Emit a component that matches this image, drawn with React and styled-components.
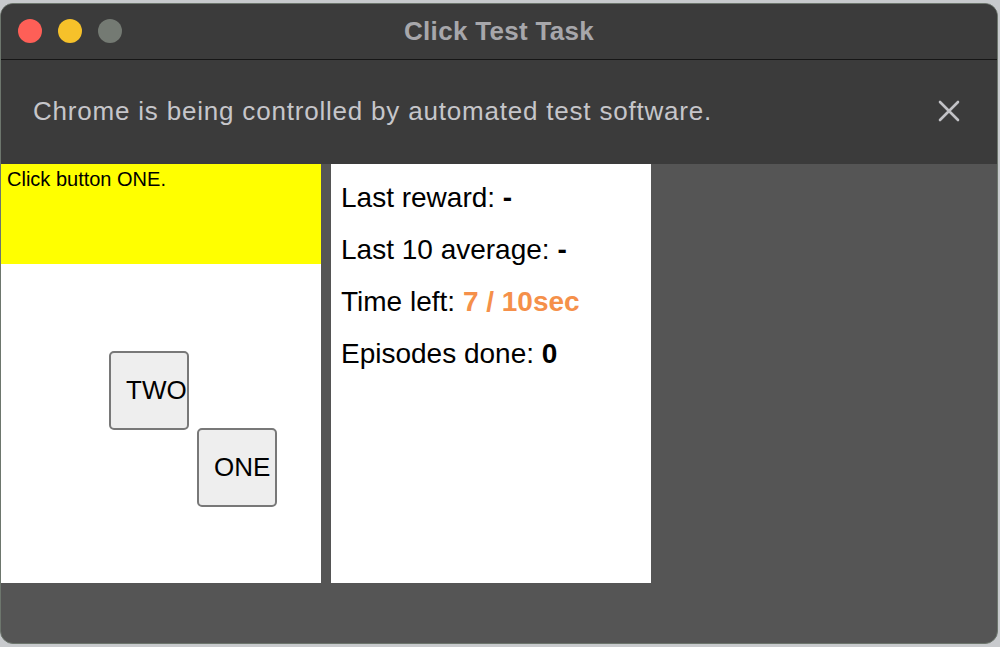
import React from "react";
import styled, { createGlobalStyle } from "styled-components";

const GlobalStyle = createGlobalStyle`
  html, body {
    margin: 0;
    padding: 0;
    background: #c8cacd;
    height: 647px;
    overflow: hidden;
  }
  #root {
    height: 647px;
  }
`;

const Window = styled.div`
  box-sizing: border-box;
  margin: 3px 2px 0 0;
  height: 641px;
  border: 1px solid #6d766d;
  border-radius: 13px;
  overflow: hidden;
  display: flex;
  flex-direction: column;
  background: #555555;
  font-family: "Liberation Sans", Arial, sans-serif;
`;

const TitleBar = styled.div`
  position: relative;
  height: 55px;
  flex: none;
  background: #3b3b3b;
  border-bottom: 1px solid #161616;
  display: flex;
  align-items: center;
  justify-content: center;
`;

const Lights = styled.div`
  position: absolute;
  left: 17px;
  top: 15px;
  display: flex;
  gap: 16px;
`;

const Light = styled.span`
  width: 24px;
  height: 24px;
  border-radius: 50%;
  background: ${({ color }) => color};
`;

const Title = styled.h1`
  margin: 0;
  font-size: 26px;
  font-weight: bold;
  color: #a7a7ab;
  letter-spacing: 0.3px;
`;

const InfoBar = styled.div`
  height: 104px;
  flex: none;
  background: #3b3b3b;
  display: flex;
  align-items: center;
  justify-content: space-between;
  padding: 0 37px 0 32px;
  box-sizing: border-box;
`;

const InfoText = styled.span`
  font-size: 26px;
  color: #c6c6ca;
  letter-spacing: 0.8px;
  margin-top: -2px;
`;

const Close = styled.svg`
  width: 22px;
  height: 22px;
  margin-top: -2px;
`;

const Content = styled.div`
  flex: 1;
  display: flex;
  align-items: flex-start;
  gap: 10px;
`;

const TaskPanel = styled.div`
  width: 320px;
  height: 419px;
  background: #ffffff;
  display: flex;
  flex-direction: column;
`;

const Query = styled.div`
  height: 100px;
  box-sizing: border-box;
  background: #ffff00;
  padding: 4px 6px;
  font-size: 20px;
  color: #000;
`;

const Area = styled.div`
  position: relative;
  flex: 1;
`;

const TaskButton = styled.button`
  position: absolute;
  left: ${({ x }) => x}px;
  top: ${({ y }) => y}px;
  width: 80px;
  height: 79px;
  box-sizing: border-box;
  padding: 0 0 0 15px;
  border: 2px solid #787878;
  border-radius: 5px;
  background: #eeeeee;
  font-family: "Liberation Sans", Arial, sans-serif;
  font-size: 26px;
  color: #000;
  text-align: left;
  white-space: nowrap;
  overflow: visible;
`;

const StatsPanel = styled.div`
  width: 320px;
  height: 419px;
  box-sizing: border-box;
  background: #ffffff;
  padding: 8px 10px;
`;

const Stat = styled.div`
  font-size: 28px;
  line-height: 52px;
  color: #000;
  white-space: nowrap;
`;

const Value = styled.b`
  color: ${({ color }) => color || "#000"};
`;

const App = () => {
  return (
    <>
      <GlobalStyle />
      <Window>
        <TitleBar>
          <Lights>
            <Light color="#fe5f57" />
            <Light color="#f6c12a" />
            <Light color="#747a73" />
          </Lights>
          <Title>Click Test Task</Title>
        </TitleBar>
        <InfoBar>
          <InfoText>Chrome is being controlled by automated test software.</InfoText>
          <Close viewBox="0 0 22 22">
            <path
              d="M2 2 L20 20 M20 2 L2 20"
              stroke="#c2c2c6"
              strokeWidth="2.6"
              strokeLinecap="round"
            />
          </Close>
        </InfoBar>
        <Content>
          <TaskPanel>
            <Query>Click button ONE.</Query>
            <Area>
              <TaskButton x={108} y={87}>
                TWO
              </TaskButton>
              <TaskButton x={196} y={164}>
                ONE
              </TaskButton>
            </Area>
          </TaskPanel>
          <StatsPanel>
            <Stat>
              Last reward: <Value>-</Value>
            </Stat>
            <Stat>
              Last 10 average: <Value>-</Value>
            </Stat>
            <Stat>
              Time left: <Value color="#f5904a">7 / 10sec</Value>
            </Stat>
            <Stat>
              Episodes done: <Value>0</Value>
            </Stat>
          </StatsPanel>
        </Content>
      </Window>
    </>
  );
};

export default App;
